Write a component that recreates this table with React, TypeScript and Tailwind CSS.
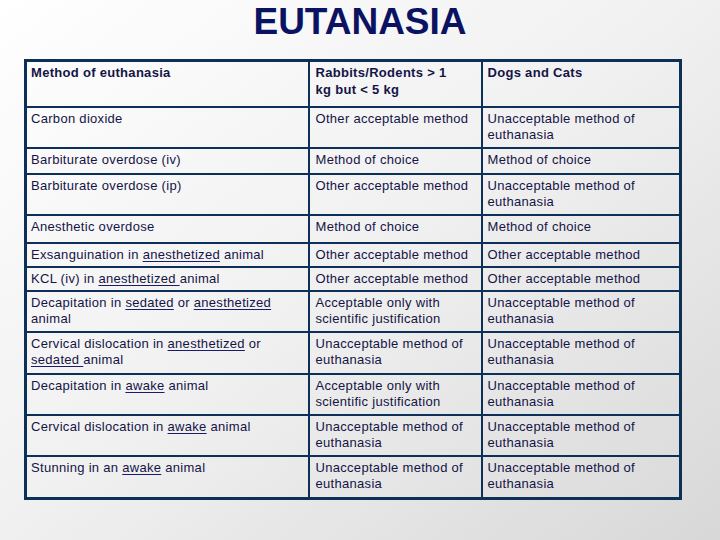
import React from "react";

const U = ({ children }: { children: React.ReactNode }) => (
  <span className="underline decoration-[#1a1a6e] underline-offset-2">{children}</span>
);

const UNACC = "Unacceptable method of euthanasia";
const OTHER = "Other acceptable method";
const CHOICE = "Method of choice";
const SCI = "Acceptable only with scientific justification";

const rows: { h: string; method: React.ReactNode; rabbits: string; dogs: string }[] = [
  { h: "h-[41px]", method: "Carbon dioxide", rabbits: OTHER, dogs: UNACC },
  { h: "h-[26px]", method: "Barbiturate overdose (iv)", rabbits: CHOICE, dogs: CHOICE },
  { h: "h-[41px]", method: "Barbiturate overdose (ip)", rabbits: OTHER, dogs: UNACC },
  { h: "h-[28px]", method: "Anesthetic overdose", rabbits: CHOICE, dogs: CHOICE },
  {
    h: "h-[24px]",
    method: (
      <>
        Exsanguination in <U>anesthetized</U> animal
      </>
    ),
    rabbits: OTHER,
    dogs: OTHER,
  },
  {
    h: "h-[24px]",
    method: (
      <>
        KCL (iv) in <U>anesthetized </U>animal
      </>
    ),
    rabbits: OTHER,
    dogs: OTHER,
  },
  {
    h: "h-[41px]",
    method: (
      <>
        Decapitation in <U>sedated</U> or <U>anesthetized</U> animal
      </>
    ),
    rabbits: SCI,
    dogs: UNACC,
  },
  {
    h: "h-[42px]",
    method: (
      <>
        Cervical dislocation in <U>anesthetized</U> or <U>sedated </U>animal
      </>
    ),
    rabbits: UNACC,
    dogs: UNACC,
  },
  {
    h: "h-[41px]",
    method: (
      <>
        Decapitation in <U>awake</U> animal
      </>
    ),
    rabbits: SCI,
    dogs: UNACC,
  },
  {
    h: "h-[41px]",
    method: (
      <>
        Cervical dislocation in <U>awake</U> animal
      </>
    ),
    rabbits: UNACC,
    dogs: UNACC,
  },
  {
    h: "h-[43px]",
    method: (
      <>
        Stunning in an <U>awake</U> animal
      </>
    ),
    rabbits: UNACC,
    dogs: UNACC,
  },
];

const cell =
  "border-2 border-[#0d3058] align-top pt-[3px] pb-0 text-[13px] leading-[16.5px] tracking-[0.3px] text-[#141446]";

export default function App() {
  return (
    <div className="w-[720px] h-[540px] overflow-hidden bg-gradient-to-br from-white via-[#f0f0f0] to-[#d8d8d8] font-['Liberation_Sans',Arial,sans-serif]">
      <h1 className="pt-[3px] text-center text-[37px] font-bold leading-none text-[#0b1262]">
        EUTANASIA
      </h1>
      <table className="mt-[19px] ml-[24px] w-[655px] table-fixed border-collapse border-[3px] border-[#0d3058]">
        <colgroup>
          <col className="w-[283px]" />
          <col className="w-[173px]" />
          <col className="w-[199px]" />
        </colgroup>
        <tbody>
          <tr className="h-[46px]">
            <td className={`${cell} pl-[4px] font-bold`}>Method of euthanasia</td>
            <td className={`${cell} pl-[6px] pr-[24px] font-bold`}>Rabbits/Rodents &gt; 1 kg but &lt; 5 kg</td>
            <td className={`${cell} pl-[5px] font-bold`}>Dogs and Cats</td>
          </tr>
          {rows.map((r, i) => (
            <tr key={i} className={r.h}>
              <td className={`${cell} pl-[4px] pr-[4px]`}>{r.method}</td>
              <td className={`${cell} pl-[6px] pr-[2px]`}>{r.rabbits}</td>
              <td className={`${cell} pl-[5px] pr-[30px]`}>{r.dogs}</td>
            </tr>
          ))}
        </tbody>
      </table>
    </div>
  );
}
